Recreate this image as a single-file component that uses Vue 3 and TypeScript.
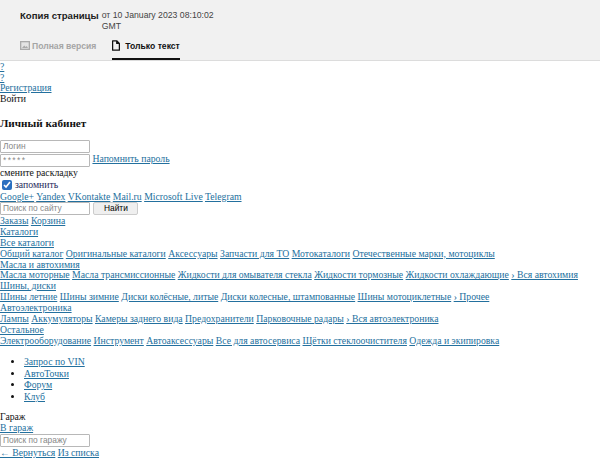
<script setup lang="ts">
const rows: string[][] = [
  ['Заказы', 'Корзина'],
  ['Каталоги'],
  ['Все каталоги'],
  ['Общий каталог', 'Оригинальные каталоги', 'Аксессуары', 'Запчасти для ТО', 'Мотокаталоги', 'Отечественные марки, мотоциклы'],
  ['Масла и автохимия'],
  ['Масла моторные', 'Масла трансмиссионные', 'Жидкости для омывателя стекла', 'Жидкости тормозные', 'Жидкости охлаждающие', '› Вся автохимия'],
  ['Шины, диски'],
  ['Шины летние', 'Шины зимние', 'Диски колёсные, литые', 'Диски колесные, штампованные', 'Шины мотоциклетные', '› Прочее'],
  ['Автоэлектроника'],
  ['Лампы', 'Аккумуляторы', 'Камеры заднего вида', 'Предохранители', 'Парковочные радары', '› Вся автоэлектроника'],
  ['Остальное'],
  ['Электрооборудование', 'Инструмент', 'Автоаксессуары', 'Все для автосервиса', 'Щётки стеклоочистителя', 'Одежда и экипировка'],
]
const social = ['Google+', 'Yandex', 'VKontakte', 'Mail.ru', 'Microsoft Live', 'Telegram']
const list = ['Запрос по VIN', 'АвтоТочки', 'Форум', 'Клуб']
</script>

<template>
  <header class="bar">
    <div class="title">
      <strong>Копия страницы</strong>
      <span class="date">от 10 January 2023 08:10:02 GMT</span>
    </div>
    <nav class="tabs">
      <span class="tab off">
        <svg width="10" height="9" viewBox="0 0 10 9"><path fill="#aaa" d="M0 0h10v9H0z"/><path fill="#e4e4e4" d="M1.3 1.3h7.4v6.4H1.3z"/><path fill="#aaa" d="M2 7l2.2-2.6 1.5 1.7 1-1L8 7z"/></svg>
        Полная версия
      </span>
      <span class="tab on">
        <svg width="8" height="11" viewBox="0 0 9 12"><path fill="none" stroke="#111" stroke-width="1.4" stroke-linejoin="round" d="M.7.7h4.6l3 3v7.6H.7zM5.3.7v3h3"/></svg>
        Только текст
      </span>
    </nav>
  </header>
  <main class="page">
    <div><a href="#">?</a></div>
    <div><a href="#">?</a></div>
    <div><a href="#">Регистрация</a></div>
    <div>Войти</div>
    <h3>Личный кабинет</h3>
    <div class="line"><input class="field" placeholder="Логин" /></div>
    <div class="line"><input class="field stars" placeholder="*****" /> <a href="#">Напомнить пароль</a></div>
    <div class="after">смените раскладку</div>
    <label class="remember"><input type="checkbox" checked /> запомнить</label>
    <div class="links"><template v-for="s in social" :key="s"><a href="#">{{ s }}</a>{{ ' ' }}</template></div>
    <div class="line search"><input class="field" placeholder="Поиск по сайту" /> <button class="btn">Найти</button></div>
    <div v-for="(r, i) in rows" :key="i" class="links"><template v-for="l in r" :key="l"><a href="#">{{ l }}</a>{{ ' ' }}</template></div>
    <ul><li v-for="l in list" :key="l"><a href="#">{{ l }}</a></li></ul>
    <div>Гараж</div>
    <div><a href="#">В гараж</a></div>
    <div class="line"><input class="field" placeholder="Поиск по гаражу" /></div>
    <div class="links"><a href="#">← Вернуться</a> <a href="#">Из списка</a></div>
  </main>
</template>

<style>
body { background: #fff; }
</style>

<style scoped>
.bar { height: 60px; background: #f1f1f1; border-bottom: 1px solid #dcdcdc; font-family: "Liberation Sans", Arial, sans-serif; color: #222; padding-left: 20px; display: flex; flex-direction: column; }
.title { display: flex; padding-top: 10px; font-size: 9.6px; width: 200px; line-height: 11px; }
.title strong { flex: none; margin-right: 3px; }
.date { color: #444; font-size: 8.7px; }
.tabs { display: flex; gap: 16px; margin-top: 5px; font-size: 8.6px; font-weight: bold; }
.tab { display: flex; align-items: center; gap: 2px; height: 23px; box-sizing: border-box; padding-bottom: 6px; }
.off { color: #a5a5a5; }
.on { color: #111; border-bottom: 2px solid #111; gap: 5px; padding-bottom: 4px; }
.page { padding-top: 0.6px; font-family: "Liberation Serif", "Times New Roman", serif; font-size: 9.72px; line-height: 10.9px; color: #111; }
a { color: #23709e; text-decoration: underline; }
h3 { font-size: 11.2px; line-height: 13px; margin: 11.4px 0 10px; }
.line { height: 14px; }
.links { min-height: 10.9px; }
.field { width: 90px; height: 13px; padding: 0 2px; box-sizing: border-box; border: 1px solid #b8b8b8; border-radius: 1px; font-family: "Liberation Sans", sans-serif; font-size: 8.4px; vertical-align: top; }
.field::placeholder { color: #888; }
.stars::placeholder { letter-spacing: 1.4px; }
.btn { height: 13px; width: 45px; margin-left: 1px; padding: 0; font-size: 8.4px; font-family: "Liberation Sans", sans-serif; border: 1px solid #ccc; border-radius: 2px; background: #efefef; vertical-align: top; }
.remember { display: flex; align-items: center; gap: 3px; height: 13px; padding-left: 2px; color: #1f2a5c; }
.remember input { margin: 0; width: 10px; height: 10px; accent-color: #2a6fc0; }
.search { height: 14.3px; margin-top: -0.8px; }
ul { margin: 9px 0; padding-left: 24px; }
li { line-height: 11.8px; }
</style>
